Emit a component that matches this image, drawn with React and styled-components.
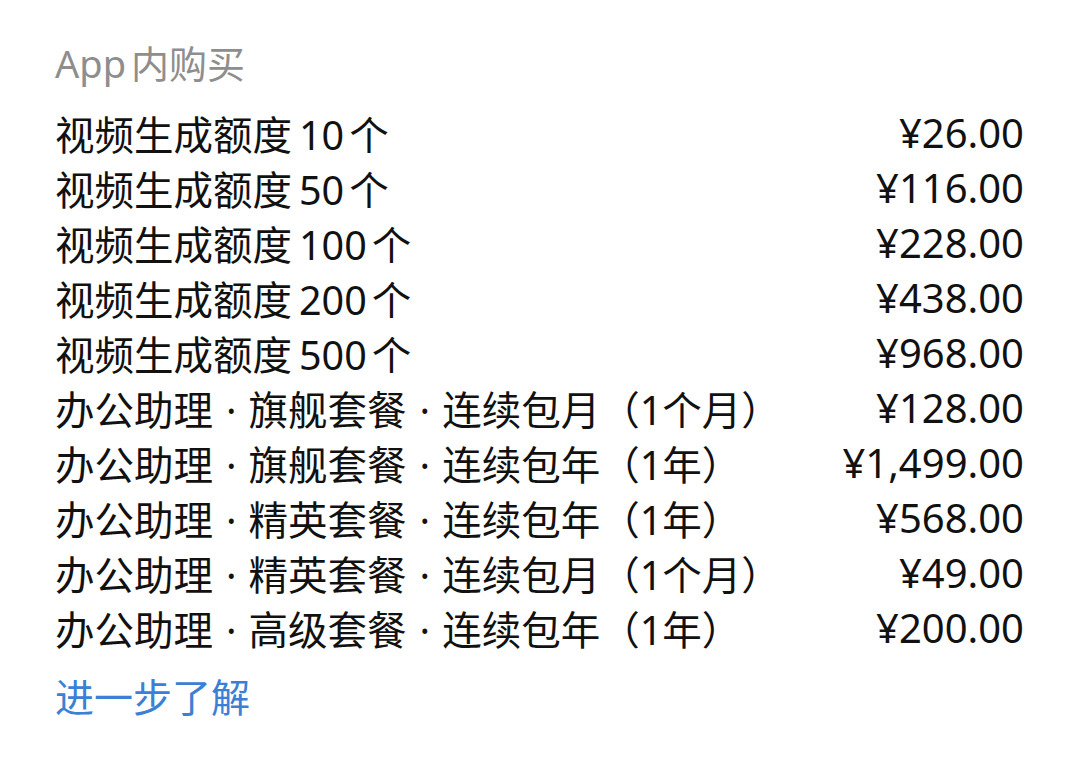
import React from "react";
import styled, { createGlobalStyle } from "styled-components";

const GlobalStyle = createGlobalStyle`
  html, body {
    margin: 0;
    padding: 0;
    background: #ffffff;
  }
  body {
    font-family: "Noto Sans", "Noto Sans CJK SC", sans-serif;
  }
`;

const Page = styled.div`
  width: 1080px;
  height: 761px;
  box-sizing: border-box;
  padding: 36px 56px 0 55px;
  background: #fff;
  display: flex;
  flex-direction: column;
`;

const Title = styled.div`
  font-size: 38px;
  line-height: 55px;
  color: #8e8e8e;
  margin-bottom: 14px;
`;

const Latin = styled.span`
  margin-right: ${(p) => p.$after || 0}px;
  margin-left: ${(p) => p.$before || 0}px;
`;

const Sep = styled.span`
  margin: 0 12px 0 13px;
`;

const List = styled.div`
  display: flex;
  flex-direction: column;
`;

const Row = styled.div`
  display: flex;
  justify-content: space-between;
  align-items: center;
  height: 55px;
  font-size: 39.5px;
  color: #111;
`;

const Name = styled.span`
  white-space: nowrap;
`;

const Price = styled.span`
  white-space: nowrap;
  font-size: 40px;
`;

const MoreLink = styled.a`
  margin-top: 14px;
  font-size: 39px;
  line-height: 55px;
  color: #3b80d4;
  text-decoration: none;
`;

const quotas = [
  ["10", "¥26.00"],
  ["50", "¥116.00"],
  ["100", "¥228.00"],
  ["200", "¥438.00"],
  ["500", "¥968.00"],
];

const plans = [
  ["旗舰套餐", "连续包月", "1个月", "¥128.00"],
  ["旗舰套餐", "连续包年", "1年", "¥1,499.00"],
  ["精英套餐", "连续包年", "1年", "¥568.00"],
  ["精英套餐", "连续包月", "1个月", "¥49.00"],
  ["高级套餐", "连续包年", "1年", "¥200.00"],
];

export default function App() {
  return (
    <>
      <GlobalStyle />
      <Page>
        <Title>
          <Latin $after={5}>App</Latin>内购买
        </Title>
        <List>
          {quotas.map(([count, price]) => (
            <Row key={count}>
              <Name>
                视频生成额度<Latin $before={7} $after={5}>{count}</Latin>个
              </Name>
              <Price>{price}</Price>
            </Row>
          ))}
          {plans.map(([tier, cycle, term, price]) => (
            <Row key={tier + cycle}>
              <Name>
                办公助理<Sep>·</Sep>{tier}<Sep>·</Sep>{cycle}（{term}）
              </Name>
              <Price>{price}</Price>
            </Row>
          ))}
        </List>
        <MoreLink href="#">进一步了解</MoreLink>
      </Page>
    </>
  );
}
